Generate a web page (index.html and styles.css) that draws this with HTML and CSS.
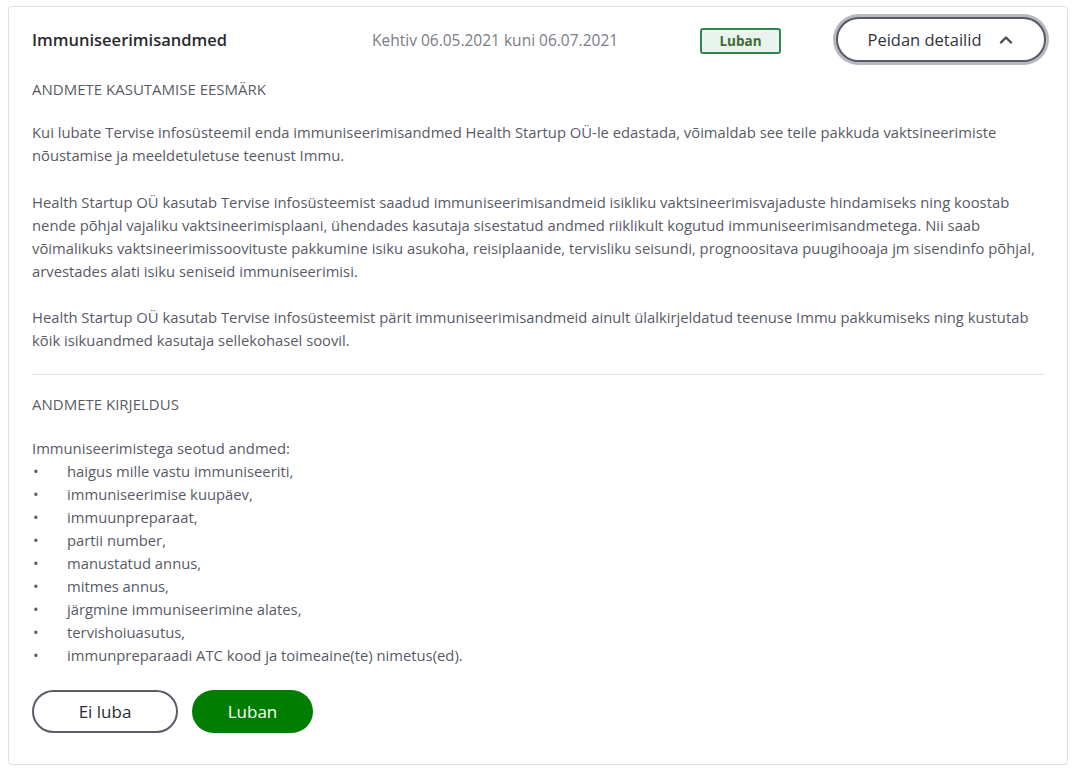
FILE: index.html
```html
<!DOCTYPE html>
<html lang="et">
<head>
<meta charset="utf-8">
<title>Immuniseerimisandmed</title>
<link rel="stylesheet" href="styles.css">
</head>
<body>
<div class="card">
  <div class="card-header">
    <h2 class="title">Immuniseerimisandmed</h2>
    <div class="validity">Kehtiv 06.05.2021 kuni 06.07.2021</div>
    <div class="badge-cell"><span class="badge">Luban</span></div>
    <button class="btn btn-toggle" type="button">Peidan detailid
      <svg class="chev" width="14" height="9" viewBox="0 0 14 9" aria-hidden="true"><path d="M2 7.5 L7 2.5 L12 7.5" fill="none" stroke="#4a4c58" stroke-width="2.4" stroke-linecap="round" stroke-linejoin="round"/></svg>
    </button>
  </div>

  <section class="section">
    <h3 class="section-title">ANDMETE KASUTAMISE EESMÄRK</h3>
    <p>Kui lubate Tervise infosüsteemil enda immuniseerimisandmed Health Startup OÜ-le edastada, võimaldab see teile pakkuda vaktsineerimiste<br>nõustamise ja meeldetuletuse teenust Immu.</p>
    <p>Health Startup OÜ kasutab Tervise infosüsteemist saadud immuniseerimisandmeid isikliku vaktsineerimisvajaduste hindamiseks ning koostab<br>nende põhjal vajaliku vaktsineerimisplaani, ühendades kasutaja sisestatud andmed riiklikult kogutud immuniseerimisandmetega. Nii saab<br>võimalikuks vaktsineerimissoovituste pakkumine isiku asukoha, reisiplaanide, tervisliku seisundi, prognoositava puugihooaja jm sisendinfo põhjal,<br>arvestades alati isiku seniseid immuniseerimisi.</p>
    <p>Health Startup OÜ kasutab Tervise infosüsteemist pärit immuniseerimisandmeid ainult ülalkirjeldatud teenuse Immu pakkumiseks ning kustutab<br>kõik isikuandmed kasutaja sellekohasel soovil.</p>
  </section>

  <hr class="divider">

  <section class="section section-second">
    <h3 class="section-title">ANDMETE KIRJELDUS</h3>
    <div class="list-block">
      <div class="list-intro">Immuniseerimistega seotud andmed:</div>
      <ul class="bullets">
        <li>haigus mille vastu immuniseeriti,</li>
        <li>immuniseerimise kuupäev,</li>
        <li>immuunpreparaat,</li>
        <li>partii number,</li>
        <li>manustatud annus,</li>
        <li>mitmes annus,</li>
        <li>järgmine immuniseerimine alates,</li>
        <li>tervishoiuasutus,</li>
        <li>immunpreparaadi ATC kood ja toimeaine(te) nimetus(ed).</li>
      </ul>
    </div>
  </section>

  <div class="actions">
    <button class="btn btn-outline" type="button">Ei luba</button>
    <button class="btn btn-primary" type="button">Luban</button>
  </div>
</div>
</body>
</html>
```

FILE: styles.css
```css
* { box-sizing: border-box; }

html, body { background: #ffffff; }

body {
  margin: 6px 6px 0 8px;
  font-family: "Open Sans", "Noto Sans", "Liberation Sans", sans-serif;
  color: #585a66;
}

.card {
  width: 1060px;
  height: 759px;
  border: 1px solid #dfe0e3;
  border-radius: 4px;
  box-shadow: 0 1px 3px rgba(0,0,0,0.06);
  padding: 10px 23px 0 23px;
  background: #fff;
}

.card-header {
  display: grid;
  grid-template-columns: 340px 328px 81px 1fr;
  align-items: center;
  height: 45px;
}

.title {
  margin: 0;
  font-size: 16.5px;
  font-weight: 600;
  color: #2b2b30;
}

.validity {
  font-size: 15.5px;
  color: #7a7c86;
}

.badge-cell { padding-top: 2px; }

.badge {
  display: block;
  width: 81px;
  height: 26px;
  line-height: 22px;
  text-align: center;
  border: 2px solid #2f8653;
  border-radius: 3px;
  background: #eaf4ee;
  color: #3f6a33;
  font-weight: 700;
  font-size: 13.5px;
}

.btn {
  font-family: inherit;
  cursor: pointer;
  border-radius: 999px;
}

.btn-toggle {
  justify-self: end;
  margin-right: -2px;
  width: 210px;
  height: 45px;
  border: 2px solid #575a69;
  background: #fff;
  box-shadow: 0 0 0 3px #b7b9bf;
  color: #33343c;
  font-size: 16.5px;
  display: flex;
  align-items: center;
  justify-content: center;
  gap: 17px;
  padding: 0 2px 0 0;
}

.chev { display: block; margin-top: -1px; }

.section { padding-top: 17px; }

.section-second { padding-top: 19px; }

.section-title {
  margin: 0;
  font-size: 15px;
  font-weight: 400;
  color: #5a5c66;
  line-height: 20px;
}

.section p {
  margin: 23.5px 0 0 0;
  font-size: 14.8px;
  line-height: 23px;
  white-space: nowrap;
}

.section p:first-of-type { margin-top: 22px; }

.divider {
  border: 0;
  border-top: 1px solid #e2e3e6;
  margin: 22px 0 0 0;
}

.list-block {
  margin-top: 23px;
  font-size: 14.8px;
  line-height: 23px;
}

.bullets {
  list-style: none;
  margin: 0;
  padding: 0;
}

.bullets li {
  display: flex;
}

.bullets li::before {
  content: "•";
  width: 34px;
  padding-left: 1px;
  color: #5a5c66;
}

.actions {
  display: flex;
  gap: 14px;
  margin-top: 23px;
}

.btn-outline {
  width: 146px;
  height: 43px;
  background: #fff;
  border: 2px solid #5a5c6a;
  color: #2c2d33;
  font-size: 17px;
}

.btn-primary {
  width: 121px;
  height: 43px;
  background: #017d01;
  border: 0;
  color: #fff;
  font-size: 17px;
}
```
